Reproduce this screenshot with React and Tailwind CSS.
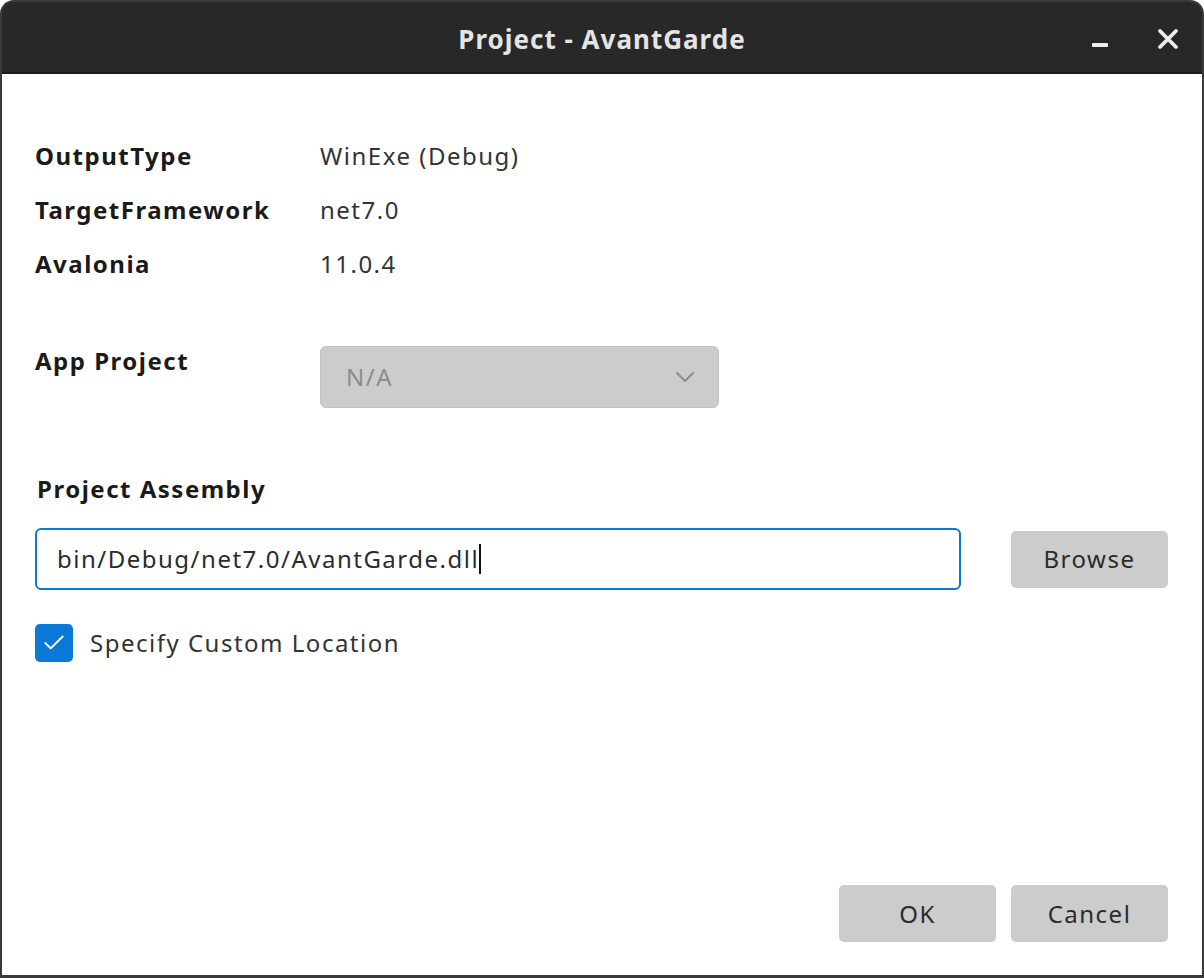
import { Check, ChevronDown } from 'lucide-react'

const font = { fontFamily: '"Noto Sans", "Open Sans", sans-serif' }

function InfoRow({ label, value }) {
  return (
    <div className="flex h-[54px] items-center">
      <span className="w-[285px] shrink-0 text-[24px] font-bold tracking-[1.5px] text-[#1a1a1a]">{label}</span>
      <span className="text-[24px] tracking-[1.5px] text-[#333333]">{value}</span>
    </div>
  )
}

function GrayButton({ children }) {
  return (
    <button className="flex h-[57px] w-[157px] items-center justify-center rounded-[5px] bg-[#cccccc] text-[24px] tracking-[1.5px] text-[#2b2b2b]">
      {children}
    </button>
  )
}

export default function App() {
  return (
    <div
      className="flex h-[978px] w-[1204px] flex-col overflow-hidden rounded-t-[14px] bg-[#3a3a3a] px-[2px] pt-[2px] pb-[3px]"
      style={font}
    >
      <div className="relative flex h-[72px] shrink-0 items-center justify-center rounded-t-[12px] border-b-2 border-[#1c1c1c] bg-[#282828] pt-[4px]">
        <span className="text-[26px] font-bold tracking-[1px] text-[#e4e4e4]">Project - AvantGarde</span>
        <svg className="absolute left-[1088px] top-[26px]" width="90" height="22" viewBox="0 0 90 22">
          <rect x="2" y="15" width="16" height="4" rx="1" fill="#eeeeee" />
          <path d="M70 3 L86 19 M86 3 L70 19" stroke="#eeeeee" strokeWidth="3.8" strokeLinecap="round" />
        </svg>
      </div>

      <div className="flex flex-1 flex-col bg-white pl-[33px] pr-[34px] pt-[55px] pb-[33px]">
        <InfoRow label="OutputType" value="WinExe (Debug)" />
        <InfoRow label="TargetFramework" value="net7.0" />
        <InfoRow label="Avalonia" value="11.0.4" />

        <div className="mt-[55px] flex">
          <span className="w-[285px] shrink-0 text-[24px] font-bold leading-[30px] tracking-[1.5px] text-[#1a1a1a]">App Project</span>
          <div className="flex h-[62px] w-[399px] items-center justify-between rounded-[6px] border border-[#c2c2c2] bg-[#cccccc] pl-[25px] pr-[17px]">
            <span className="text-[24px] tracking-[1.5px] text-[#8c8c8c]">N/A</span>
            <ChevronDown size={32} strokeWidth={1.4} className="text-[#8c8c8c]" />
          </div>
        </div>

        <span className="mt-[66px] pl-[2px] text-[24px] font-bold leading-[30px] tracking-[1.5px] text-[#1a1a1a]">Project Assembly</span>

        <div className="mt-[24px] flex items-center gap-[50px]">
          <div className="flex h-[62px] flex-1 items-center rounded-[6px] border-2 border-[#0a78d7] bg-white pl-[20px]">
            <span className="text-[24px] tracking-[1.5px] text-[#2b2b2b]">bin/Debug/net7.0/AvantGarde.dll</span>
            <span className="h-[30px] w-[2px] bg-[#111111]" />
          </div>
          <GrayButton>Browse</GrayButton>
        </div>

        <div className="mt-[34px] flex items-center gap-[17px]">
          <div className="flex h-[38px] w-[38px] items-center justify-center rounded-[5px] bg-[#0a78d7]">
            <Check size={26} strokeWidth={1.8} className="text-white" />
          </div>
          <span className="text-[24px] tracking-[1.5px] text-[#333333]">Specify Custom Location</span>
        </div>

        <div className="mt-auto flex justify-end gap-[15px]">
          <GrayButton>OK</GrayButton>
          <GrayButton>Cancel</GrayButton>
        </div>
      </div>
    </div>
  )
}
